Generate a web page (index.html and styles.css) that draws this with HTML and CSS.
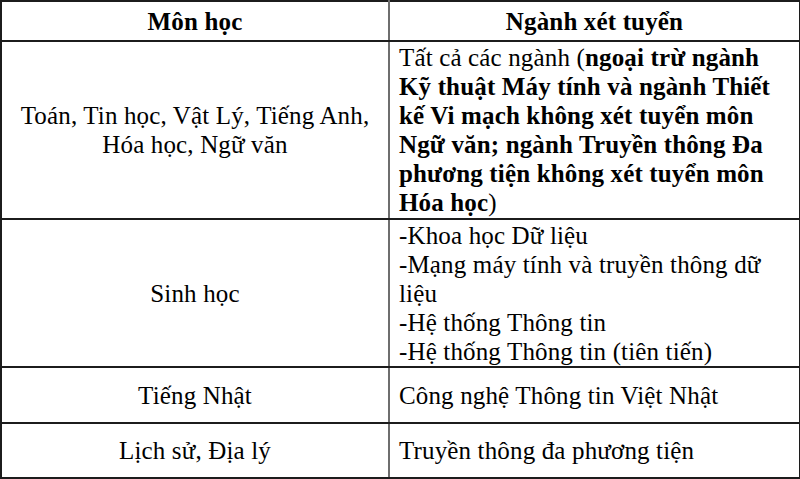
FILE: index.html
```html
<!DOCTYPE html>
<html lang="vi">
<head>
<meta charset="utf-8">
<title>Môn học - Ngành xét tuyển</title>
<link rel="stylesheet" href="styles.css">
</head>
<body>
<table class="grid">
  <colgroup>
    <col class="col-subject">
    <col class="col-major">
  </colgroup>
  <thead>
    <tr class="row-head">
      <th>Môn học</th>
      <th>Ngành xét tuyển</th>
    </tr>
  </thead>
  <tbody>
    <tr class="row-1">
      <td class="subject">Toán, Tin học, Vật Lý, Tiếng Anh,<br>Hóa học, Ngữ văn</td>
      <td class="major top">Tất cả các ngành (<b>ngoại trừ ngành<br>Kỹ thuật Máy tính và ngành Thiết<br>kế Vi mạch không xét tuyển môn<br>Ngữ văn; ngành Truyền thông Đa<br>phương tiện không xét tuyển môn<br>Hóa học</b>)</td>
    </tr>
    <tr class="row-2">
      <td class="subject">Sinh học</td>
      <td class="major top">-Khoa học Dữ liệu<br>-Mạng máy tính và truyền thông dữ<br>liệu<br>-Hệ thống Thông tin<br>-Hệ thống Thông tin (tiên tiến)</td>
    </tr>
    <tr class="row-3">
      <td class="subject">Tiếng Nhật</td>
      <td class="major">Công nghệ Thông tin Việt Nhật</td>
    </tr>
    <tr class="row-4">
      <td class="subject">Lịch sử, Địa lý</td>
      <td class="major">Truyền thông đa phương tiện</td>
    </tr>
  </tbody>
</table>
</body>
</html>
```
FILE: styles.css
```css
html, body {
  margin: 0;
  padding: 0;
  background: #ffffff;
}
body {
  font-family: "Liberation Serif", "Times New Roman", serif;
  font-size: 25px;
  letter-spacing: 0.15px;
  line-height: 29px;
  color: #000000;
}
.grid {
  border-collapse: collapse;
  width: 799px;
  table-layout: fixed;
  margin: 0;
}
.col-subject { width: 388px; }
.col-major { width: 411px; }
.grid th,
.grid td {
  border: 2px solid #1c1c1c;
  padding: 0;
  box-sizing: border-box;
}
.grid th:first-child,
.grid td:first-child {
  border-right: 2px solid #6e6e6e;
}
.grid th {
  font-weight: bold;
  text-align: center;
  vertical-align: middle;
}
.row-head { height: 40px; }
.row-1 { height: 178px; }
.row-2 { height: 148px; }
.row-3 { height: 56px; }
.row-4 { height: 55px; }
.subject {
  text-align: center;
  vertical-align: middle;
}
.major {
  text-align: left;
  vertical-align: middle;
  padding-left: 9px !important;
}
.major.top {
  vertical-align: top;
  padding-top: 1px !important;
}
```
